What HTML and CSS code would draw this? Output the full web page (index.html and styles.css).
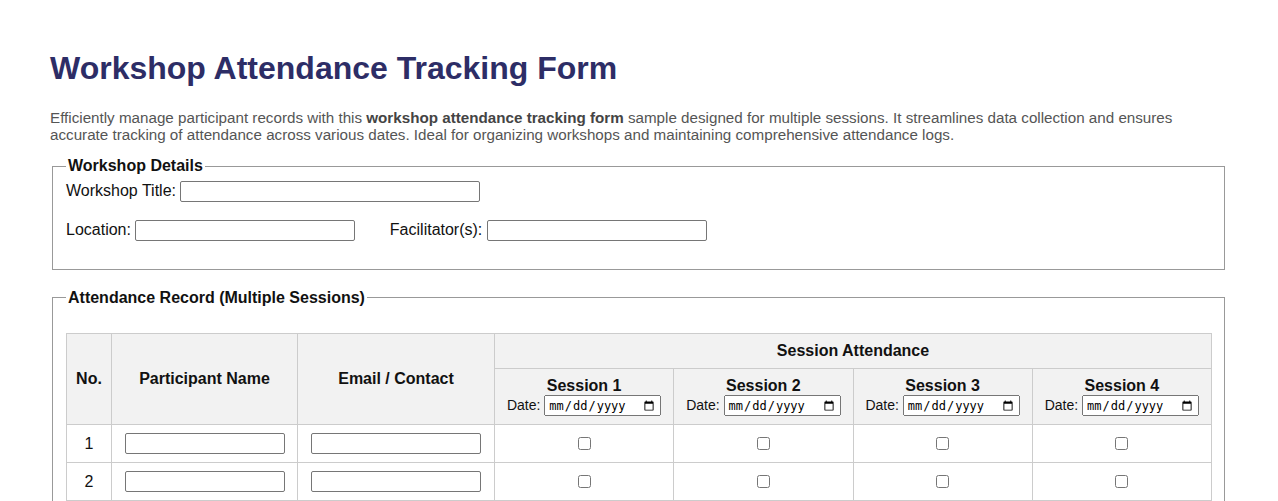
FILE: index.html
```html
<!DOCTYPE html>
<html lang="en">
<head>
  <meta charset="UTF-8" />
  <meta name="viewport" content="width=device-width, initial-scale=1.0"/>
  <title>Workshop Attendance Tracking Form</title>
  <link rel="stylesheet" href="styles.css">
</head>
<body>
  <h1>Workshop Attendance Tracking Form</h1>
  <p class="intro">Efficiently manage participant records with this <strong>workshop attendance tracking form</strong> sample designed for multiple sessions. It streamlines data collection and ensures accurate tracking of attendance across various dates. Ideal for organizing workshops and maintaining comprehensive attendance logs.</p>

  <form>
    <!-- Workshop info -->
    <fieldset>
      <legend>Workshop Details</legend>
      <div class="field-row">
        <label>Workshop Title: <input type="text" class="w-title"></label>
      </div>
      <div class="field-row">
        <label class="spaced">Location: <input type="text" class="w-short"></label>
        <label>Facilitator(s): <input type="text" class="w-short"></label>
      </div>
    </fieldset>

    <!-- Attendance table -->
    <fieldset>
      <legend>Attendance Record (Multiple Sessions)</legend>
      <table class="attendance">
        <colgroup>
          <col class="c-no">
          <col class="c-name">
          <col class="c-email">
          <col><col><col><col>
        </colgroup>
        <thead>
          <tr>
            <th rowspan="2">No.</th>
            <th rowspan="2">Participant Name</th>
            <th rowspan="2">Email / Contact</th>
            <th colspan="4">Session Attendance</th>
          </tr>
          <tr>
            <th>Session 1<br><label class="date-label">Date: <input type="date"></label></th>
            <th>Session 2<br><label class="date-label">Date: <input type="date"></label></th>
            <th>Session 3<br><label class="date-label">Date: <input type="date"></label></th>
            <th>Session 4<br><label class="date-label">Date: <input type="date"></label></th>
          </tr>
        </thead>
        <tbody>
          <tr>
            <td>1</td>
            <td><input type="text" class="in-name"></td>
            <td><input type="text" class="in-email"></td>
            <td><input type="checkbox"></td>
            <td><input type="checkbox"></td>
            <td><input type="checkbox"></td>
            <td><input type="checkbox"></td>
          </tr>
          <tr>
            <td>2</td>
            <td><input type="text" class="in-name"></td>
            <td><input type="text" class="in-email"></td>
            <td><input type="checkbox"></td>
            <td><input type="checkbox"></td>
            <td><input type="checkbox"></td>
            <td><input type="checkbox"></td>
          </tr>
          <tr>
            <td>3</td>
            <td><input type="text" class="in-name"></td>
            <td><input type="text" class="in-email"></td>
            <td><input type="checkbox"></td>
            <td><input type="checkbox"></td>
            <td><input type="checkbox"></td>
            <td><input type="checkbox"></td>
          </tr>
        </tbody>
      </table>
    </fieldset>
  </form>
</body>
</html>
```

FILE: styles.css
```css
body {
  margin: 0;
  padding: 24px 50px;
  font-family: "Liberation Sans", Arial, sans-serif;
  font-size: 16px;
  color: #111;
  background: #fff;
}

h1 {
  margin: 26px 0 22px;
  font-size: 32px;
  color: #2d2d66;
}

.intro {
  margin: 0 0 14px;
  font-size: 15.2px;
  line-height: 17px;
  color: #555;
}

.intro strong {
  color: #444;
}

fieldset {
  margin: 0 3px 19px 2px;
  padding-left: 13px;
  border: 1px solid #999;
}

legend {
  font-weight: bold;
  padding: 0 2px;
}

.field-row {
  margin-bottom: 18px;
}

.spaced {
  margin-right: 30px;
}

input[type="text"] {
  border: 1px solid #767676;
  border-radius: 2px;
  padding: 1px 2px;
  font-size: 13px;
  height: 21px;
  box-sizing: border-box;
}

.w-title { width: 300px; }
.w-short { width: 220px; }
.in-name { width: 160px; }
.in-email { width: 170px; }

/* Table */
.attendance {
  width: 100%;
  margin-top: 21px;
  border-collapse: collapse;
  table-layout: fixed;
}

.c-no { width: 45px; }
.c-name { width: 186px; }
.c-email { width: 197px; }

.attendance th,
.attendance td {
  border: 1px solid #ccc;
  padding: 8px;
  text-align: center;
}

.attendance th {
  background-color: #f2f2f2;
  line-height: 18px;
}

.date-label {
  font-weight: normal;
  font-size: 14px;
}

.date-label input {
  font-size: 12px;
  padding: 1px 2px;
  height: 21px;
  box-sizing: border-box;
}

.attendance td input[type="checkbox"] {
  margin: 3px 0;
}
```
